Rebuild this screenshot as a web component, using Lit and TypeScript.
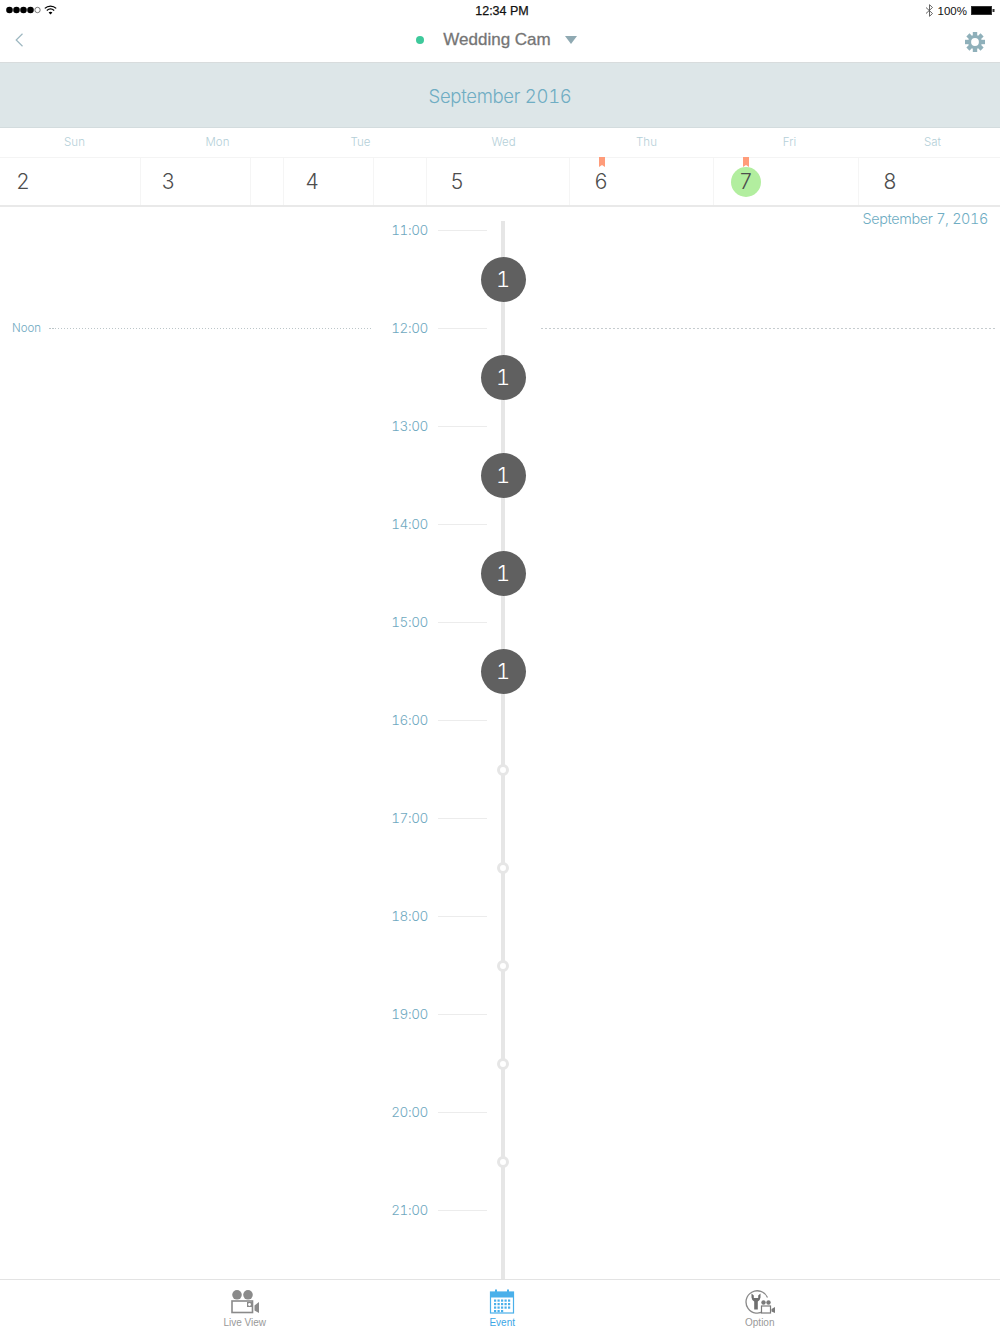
import { LitElement, html, css, svg } from "lit";
import { customElement } from "lit/decorators.js";

const WEEK = ["Sun", "Mon", "Tue", "Wed", "Thu", "Fri", "Sat"];
const DAYS = [
  { n: 2, w: 140, pad: 17 },
  { n: 3, w: 143, pad: 21, split: 109 },
  { n: 4, w: 143, pad: 22, split: 89 },
  { n: 5, w: 143, pad: 24 },
  { n: 6, w: 144, pad: 25, mark: true },
  { n: 7, w: 145, pad: 26, mark: true, today: true },
  { n: 8, w: 142, pad: 25 },
];
const HOURS = ["11:00","12:00","13:00","14:00","15:00","16:00","17:00","18:00","19:00","20:00","21:00"];

const gearTeeth = [0, 45, 90, 135, 180, 225, 270, 315];

@customElement("app-root")
export class AppRoot extends LitElement {
  static styles = css`
    :host { display: block; width: 1000px; height: 1334px; overflow: hidden; background: #fff; font-family: "Liberation Sans", Arial, sans-serif; }
    .page { height: 1334px; display: flex; flex-direction: column; }
    .status { height: 20px; flex: none; display: grid; grid-template-columns: 1fr auto 1fr; align-items: center; padding: 1px 5px 0 6px; font-size: 11.5px; color: #111; box-sizing: border-box; }
    .status-l { display: flex; align-items: center; gap: 3px; margin-top: -1px; }
    .status-r { display: flex; align-items: center; justify-content: flex-end; gap: 4px; }
    .clock { margin-left: 3px; font-size: 12.5px; -webkit-text-stroke: 0.25px #111; }
    .nav { flex: none; display: grid; grid-template-columns: 1fr auto 1fr; align-items: center; border-bottom: 1px solid #d8dcdd; padding: 0 15px 2px 15px; height: 40px; }
    .nav-c { display: flex; align-items: center; padding-right: 7px; }
    .online { width: 8px; height: 8px; border-radius: 50%; background: #3ec99b; margin-right: 19px; }
    .cam { font-size: 17px; font-weight: 400; color: #757575; -webkit-text-stroke: 0.3px #757575; margin-right: 14px; }
    .nav-r { display: flex; justify-content: flex-end; padding-top: 4px; }
    .month { height: 65px; flex: none; box-sizing: border-box; padding-top: 2px; display: flex; align-items: center; justify-content: center; background: #dde6e8; border-bottom: 1px solid #d3dcde; color: #6fadc3; font-family: Inter, "Liberation Sans", sans-serif; font-size: 18.5px; letter-spacing: -0.3px; font-weight: 300; font-variant-numeric: tabular-nums; }
    .weekdays { height: 29px; flex: none; box-sizing: border-box; padding-bottom: 1px; display: grid; grid-template-columns: repeat(7, 143px); padding-left: 3px; align-items: center; font-family: Inter, "Liberation Sans", sans-serif; font-weight: 300; font-size: 11.5px; color: #b4cfd8; text-align: center; overflow: hidden; }
    .dates { flex: none; display: flex; border-top: 1px solid #f4f4f4; border-bottom: 2px solid #e9e9e9; box-sizing: border-box; height: 50px; }
    .day { position: relative; box-sizing: border-box; display: flex; align-items: center; border-left: 1px solid #f5f5f5; font-family: Inter, "Liberation Sans", sans-serif; font-weight: 300; font-size: 21px; color: #4d4d4d; }
    .day:first-child { border-left: 0; }
    .num { position: relative; width: 12px; display: flex; justify-content: center; }
    .num.today::before { content: ""; position: absolute; left: -9px; top: -2px; width: 30px; height: 30px; border-radius: 50%; background: #b2ee9f; }
    .num span { position: relative; }
    .split { position: absolute; top: 0; bottom: 0; width: 1px; background: #f5f5f5; }
    .mark { position: absolute; top: -1px; left: 29px; }
    .timeline { position: relative; flex: 1; min-height: 0; overflow: hidden; padding-top: 14px; font-family: Inter, "Liberation Sans", sans-serif; font-weight: 300; font-variant-numeric: tabular-nums; }
    .picked { position: absolute; top: 3px; right: 12px; font-size: 14.4px; letter-spacing: -0.35px; color: #6fadc3; }
    .row { height: 98px; display: grid; grid-template-columns: 373px 55px 10px 49px 14px 4px 36px 454px; font-size: 13.6px; color: #6fa9bf; }
    .noon { display: flex; align-items: flex-start; height: 18px; padding-left: 12px; font-size: 11.5px; line-height: 18px; gap: 8px; box-sizing: border-box; }
    .dots { flex: 1; height: 1px; margin-top: 9px; background: repeating-linear-gradient(90deg, #bcc6c9 0 1.5px, transparent 1.5px 3px); }
    .noon-r { height: 1px; margin-top: 9px; background: repeating-linear-gradient(90deg, #c6cccf 0 2px, transparent 2px 4px); }
    .time { text-align: right; line-height: 18px; height: 18px; letter-spacing: -0.4px; }
    .tick { height: 9px; border-bottom: 1px solid #ececec; box-sizing: content-box; }
    .rail { background: #e6e6e6; position: relative; }
    .badge { position: absolute; left: -20.5px; top: 35.5px; width: 45px; height: 45px; border-radius: 50%; background: #606060; color: #fff; display: flex; align-items: center; justify-content: center; font-size: 22px; font-weight: 300; z-index: 1; padding-bottom: 1px; box-sizing: border-box; }
    .ring { position: absolute; left: -4px; top: 53px; width: 6px; height: 6px; border: 3px solid #e6e6e6; border-radius: 50%; background: #fff; }
    .tabs { height: 55px; flex: none; box-sizing: border-box; border-top: 1px solid #e3e3e3; display: grid; grid-template-columns: repeat(3, 257.5px); padding-left: 116px; background: #fff; position: relative; }
    .tab { display: flex; flex-direction: column; align-items: center; font-size: 10px; color: #999; padding-top: 9px; }
    .tab svg { display: block; height: 27px; }
    .tab.on { color: #3ba6e6; }
    .tab span { line-height: 12px; margin-top: 1px; }
  `;

  render() {
    return html`<div class="page">
      <div class="status">
        <div class="status-l">
          <svg width="35" height="8" viewBox="0 0 35 8">
            ${[3.5, 10.5, 17.5, 24.5].map((x) => svg`<circle cx=${x} cy="4" r="3.3" fill="#000"/>`)}
            <circle cx="31.5" cy="4" r="2.7" fill="none" stroke="#555" stroke-width=".8"/>
          </svg>
          <svg width="13" height="10" viewBox="0 0 13 10" fill="none" stroke="#000" stroke-width="1.3">
            <path d="M.8 3.4C4 .3 9 .3 12.2 3.4"/><path d="M2.8 5.5C5 3.6 8 3.6 10.2 5.5"/><path d="M6.5 9.6 4.6 7.4C5.7 6.5 7.3 6.5 8.4 7.4Z" fill="#000" stroke="none"/>
          </svg>
        </div>
        <div class="clock">12:34 PM</div>
        <div class="status-r">
          <svg width="9" height="13" viewBox="0 0 9 13" fill="none" stroke="#555" stroke-width=".9"><path d="M1 3.5 7.5 9.5 4.5 12.3V.7L7.5 3.5 1 9.5"/></svg>
          <span>100%</span>
          <svg width="24" height="9" viewBox="0 0 24 9"><rect x=".5" y=".5" width="20" height="8" fill="#000" stroke="#333"/><rect x="21.5" y="3" width="2" height="3" fill="#333"/></svg>
        </div>
      </div>
      <div class="nav">
        <svg width="9" height="14" viewBox="0 0 9 14" fill="none" stroke="#9db7c1" stroke-width="1.2"><path d="M7.5 .8 1.2 7 7.5 13.2"/></svg>
        <div class="nav-c">
          <i class="online"></i>
          <span class="cam">Wedding Cam</span>
          <svg width="12" height="8" viewBox="0 0 12 8"><path d="M0 0H12L6 8Z" fill="#8fa9b2"/></svg>
        </div>
        <div class="nav-r">
          <svg width="20" height="20" viewBox="0 0 20 20">
            ${gearTeeth.map((a) => svg`<rect x="7.8" y="0" width="4.4" height="5" fill="#8fb0ba" transform="rotate(${a} 10 10)"/>`)}
            <circle cx="10" cy="10" r="5.4" fill="none" stroke="#8fb0ba" stroke-width="3"/>
          </svg>
        </div>
      </div>
      <div class="month">September 2016</div>
      <div class="weekdays">${WEEK.map((d) => html`<div>${d}</div>`)}</div>
      <div class="dates">
        ${DAYS.map((d) => html`<div class="day" style="width:${d.w}px;padding-left:${d.pad}px">
          ${d.split ? html`<i class="split" style="left:${d.split}px"></i>` : ""}
          ${d.mark ? html`<svg class="mark" width="6" height="10" viewBox="0 0 6 10"><path d="M0 0H6V10L3 8 0 10Z" fill="#ff9c7a"/></svg>` : ""}
          <div class="num ${d.today ? "today" : ""}"><span>${d.n}</span></div>
        </div>`)}
      </div>
      <div class="timeline">
        <div class="picked">September 7, 2016</div>
        ${HOURS.map((h, i) => html`<div class="row">
          ${h === "12:00" ? html`<div class="noon"><span>Noon</span><i class="dots"></i></div>` : html`<div></div>`}
          <div class="time">${h}</div>
          <div></div>
          <div class="tick"></div>
          <div></div>
          <div class="rail">${i < 5 ? html`<div class="badge">1</div>` : i < 10 ? html`<div class="ring"></div>` : ""}</div>
          <div></div>
          ${h === "12:00" ? html`<div class="noon-r"></div>` : html`<div></div>`}
        </div>`)}
      </div>
      <div class="tabs">
        <div class="tab">
          <svg width="30" height="27" viewBox="0 0 30 27">
            <circle cx="7" cy="5.8" r="4.8" fill="#8a8a8a"/><circle cx="18" cy="5.8" r="4.8" fill="#8a8a8a"/>
            <rect x="2" y="12" width="20.5" height="11.5" fill="#fff" stroke="#8a8a8a" stroke-width="1.6"/>
            <rect x="17" y="13" width="5" height="5" fill="#8a8a8a"/><circle cx="19.5" cy="15.5" r="1.4" fill="#fff"/>
            <path d="M24.5 16.5 29 13V24L24.5 21.5Z" fill="#8a8a8a"/>
          </svg>
          <span>Live View</span>
        </div>
        <div class="tab on">
          <svg width="26" height="27" viewBox="0 0 26 27">
            <rect x="1.5" y="3" width="23" height="21" fill="#fff" stroke="#4ab0ea" stroke-width="1.2"/>
            <rect x="1" y="3" width="24" height="5.5" fill="#4ab0ea"/>
            <rect x="6" y=".5" width="2" height="4" fill="#4ab0ea"/><rect x="18" y=".5" width="2" height="4" fill="#4ab0ea"/>
            ${[10.5, 14, 17.5, 21].flatMap((y, r) => [5, 8.5, 12, 15.5, 19].slice(0, r === 3 ? 3 : 5).map((x) => svg`<rect x=${x} y=${y} width="2.2" height="2.2" fill="#4ab0ea"/>`))}
          </svg>
          <span>Event</span>
        </div>
        <div class="tab">
          <svg width="32" height="27" viewBox="0 0 32 27">
            <path d="M20.5 21.5A11.2 11.2 0 1 1 23.5 8.5" fill="none" stroke="#8a8a8a" stroke-width="1.3"/>
            <path d="M7.5 4.5V8.5A5 5 0 0 0 10.2 12.5V20.5H13.8V12.5A5 5 0 0 0 16.5 8.5V4.5L14.2 6.5V9H9.8V6.5Z" fill="#6f6f6f"/>
            <circle cx="19.5" cy="13.5" r="2.2" fill="#7a7a7a"/><circle cx="24.5" cy="13.5" r="2.2" fill="#7a7a7a"/>
            <rect x="17.5" y="17" width="9" height="7" fill="#fff" stroke="#7a7a7a" stroke-width="1.2"/>
            <path d="M27.5 20 31 18V24L27.5 22.5Z" fill="#7a7a7a"/>
          </svg>
          <span>Option</span>
        </div>
      </div>
    </div>`;
  }
}
